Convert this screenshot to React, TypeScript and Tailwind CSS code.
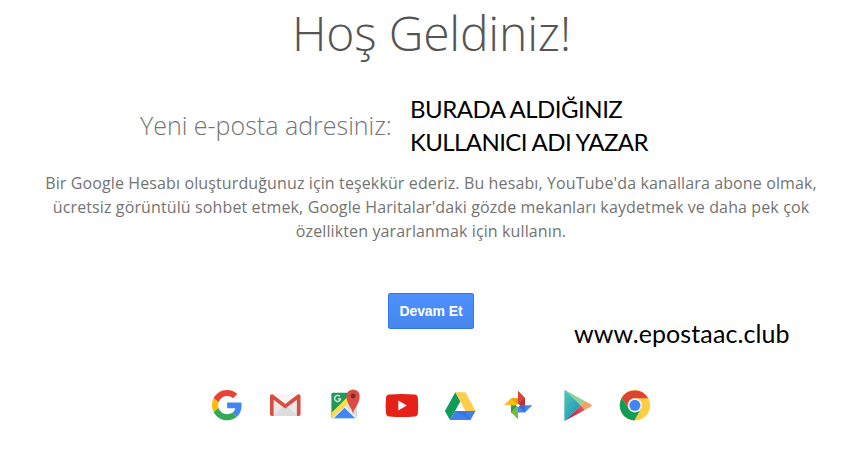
import type { ReactNode } from "react";

function Icon({ label, children }: { label: string; children: ReactNode }) {
  return (
    <svg role="img" aria-label={label} viewBox="0 0 32 32" className="size-8 shrink-0 overflow-visible">
      {children}
    </svg>
  );
}

function GoogleIcon() {
  return (
    <Icon label="Google">
      <g transform="translate(1 1) scale(.63)">
        <path fill="#EA4335" d="M24 9.5c3.54 0 6.71 1.22 9.21 3.6l6.85-6.85C35.9 2.38 30.47 0 24 0 14.62 0 6.51 5.38 2.56 13.22l7.98 6.19C12.43 13.72 17.74 9.5 24 9.5z" />
        <path fill="#4285F4" d="M46.98 24.55c0-1.57-.15-3.09-.38-4.55H24v9.02h12.94c-.58 2.96-2.26 5.48-4.78 7.18l7.73 6c4.51-4.18 7.09-10.36 7.09-17.65z" />
        <path fill="#FBBC05" d="M10.53 28.59c-.48-1.45-.76-2.99-.76-4.59s.27-3.14.76-4.59l-7.98-6.19C.92 16.46 0 20.12 0 24c0 3.88.92 7.54 2.56 10.78l7.97-6.19z" />
        <path fill="#34A853" d="M24 48c6.48 0 11.93-2.13 15.89-5.81l-7.73-6c-2.15 1.45-4.92 2.3-8.16 2.3-6.26 0-11.57-4.22-13.47-9.91l-7.98 6.19C6.51 42.62 14.62 48 24 48z" />
      </g>
    </Icon>
  );
}

function GmailIcon() {
  return (
    <Icon label="Gmail">
      <rect x="1" y="5.5" width="30.5" height="21.5" rx="1.5" fill="#e9e9e9" />
      <path d="M4 27 16.2 16 28.5 27z" fill="#dcdcdc" />
      <path d="M3 6h26.5L16.2 16.5z" fill="#f5f5f5" />
      <path d="M1 7.2C1 6 1.8 5.3 3 5.3c.6 0 1 .2 1.5.6l11.7 9 11.8-9c.4-.4.9-.6 1.5-.6 1.2 0 2 .8 2 1.9V25c0 1.2-.8 2-2 2h-1.6V10.8L16.2 19.6 4.6 10.8V27H3c-1.2 0-2-.8-2-2z" fill="#da4b40" />
    </Icon>
  );
}

function MapsIcon() {
  return (
    <Icon label="Google Maps">
      <defs>
        <clipPath id="map"><rect x="3.4" y="3.7" width="25" height="25.6" rx="1.6" /></clipPath>
      </defs>
      <g clipPath="url(#map)">
        <rect x="3" y="3" width="26" height="27" fill="#23985b" />
        <path d="M3 29.5 29 3.5v27H3z" fill="#ececec" />
        <path d="M3 29.5v-5.2L24 3.5h6v3z" fill="#fbdc4b" />
        <path d="M5.7 29.5 16.5 18.7 27.3 29.5z" fill="#4285f4" />
        <path d="m18 17.3 11 11V13.5l-5-1z" fill="#d9dadb" />
      </g>
      <path d="M25 25c-.5-6-6.5-9.6-6.5-18A6.6 6.6 0 0 1 31.700 7c0 8.400-6 12-6.700 18z" fill="#dd4b45" />
      <circle cx="25.1" cy="7" r="2.4" fill="#802825" />
      <path d="M11.800 7.400A3 3 0 1 0 12.600 9.800H9.800" fill="none" stroke="#e6f5ed" strokeWidth="1.3" />
    </Icon>
  );
}

function YouTubeIcon() {
  return (
    <Icon label="YouTube">
      <path d="M3.5 5.5Q16 4.3 28.5 5.5c2.4.2 3.2 1.4 3.4 3.5q.5 7.5 0 15c-.2 2.1-1 3.3-3.4 3.5q-12.500 1.200-25 0C1.100 27.300.2 26.100 0 24q-.8-7.500 0-15c.2-2.100 1.100-3.300 3.500-3.500z" fill="#e62117" />
      <path d="M12.300 11.500v10l8.500-5z" fill="#fff" />
    </Icon>
  );
}

function DriveIcon() {
  return (
    <Icon label="Google Drive">
      <path d="m11.300 3.300 5.200 9L6 31 .9 22z" fill="#109b58" />
      <path d="M11.300 3.300h10.200L31.600 22H21.500z" fill="#fdcd4b" />
      <path d="M11 22h20.600l-5.100 9H6z" fill="#3f80eb" />
      <path d="m11 22 10.500 0 5 9z" fill="#3777df" />
    </Icon>
  );
}

function PhotosIcon() {
  return (
    <Icon label="Google Photos">
      <path d="M16 1.700v14.600h7V8.800z" fill="#db4437" />
      <path d="m16 16.300 7-7.500v7.500z" fill="#b5323a" />
      <path d="M16 16.300h14.300L23 23.500h-7z" fill="#4285f4" />
      <path d="M16 16.300h7v7.200z" fill="#3a6cc8" />
      <path d="M16 16.300v14L9 23.200v-6.900z" fill="#76b943" />
      <path d="M16 16.300 9 23.200v-6.900z" fill="#2f9b50" />
      <path d="M16 16.300H1.900L9 9.200h7z" fill="#fbbc19" />
      <path d="M16 16.300 9 9.200h7z" fill="#f2a00b" />
      <circle cx="16" cy="16.300" r="1.600" fill="#fff" />
    </Icon>
  );
}

function PlayIcon() {
  return (
    <Icon label="Google Play">
      <defs>
        <linearGradient id="play" x1="0" y1="0" x2="1" y2="1">
          <stop stopColor="#55c7b4" />
          <stop offset=".6" stopColor="#2aa5b8" />
          <stop offset="1" stopColor="#477fae" />
        </linearGradient>
        <linearGradient id="play-red" x1="0" y1="1" x2="1" y2="0">
          <stop stopColor="#743070" />
          <stop offset=".5" stopColor="#ce3150" />
          <stop offset="1" stopColor="#e8635b" />
        </linearGradient>
      </defs>
      <path d="M3.300 2Q3.300 1 4.500 1.300L20 16.400 4.500 31.500Q3.300 32 3.300 31z" fill="url(#play)" />
      <path d="M4 1 23.800 12 20 16.400z" fill="#91d19a" />
      <path d="m23.800 12 6.500 3.600q1.200.8 0 1.700L23.800 21 20 16.400z" fill="#f6a266" />
      <path d="M20 16.400 23.800 21 4 31.800z" fill="url(#play-red)" />
    </Icon>
  );
}

function ChromeIcon() {
  return (
    <Icon label="Google Chrome">
      <circle cx="15.900" cy="16.300" r="15.200" fill="#ffcd42" />
      <path d="M2.700 8.800A15.200 15.200 0 0 1 29.100 9.300H15.900a7 7 0 0 0-6.100 10.500z" fill="#db4437" />
      <path d="M2.700 8.800a15.200 15.200 0 0 0 12.600 22.700l6.700-11.700a7 7 0 0 1-12.200 0z" fill="#109d58" />
      <circle cx="15.900" cy="16.300" r="7.100" fill="#f2f2f2" />
      <circle cx="15.900" cy="16.300" r="5.500" fill="#4285f4" />
    </Icon>
  );
}

export default function App() {
  return (
    <main className="flex h-[463px] w-[849px] flex-col overflow-hidden bg-white font-['Open_Sans',sans-serif] text-[#737373]">
      <h1 className="pl-[14px] text-center text-[48px] leading-[66px] font-light tracking-[-0.2px] text-[#555]">Hoş Geldiniz!</h1>

      <section className="mt-[26px] flex h-[66px] items-center pl-[140px]">
        <p className="w-[270px] text-[25px] leading-[34px] font-light whitespace-nowrap">Yeni e-posta adresiniz:</p>
        <div className="font-['Lato',sans-serif] text-[24px] leading-[33px] whitespace-nowrap text-black">
          <p className="tracking-[-0.5px]">BURADA ALDIĞINIZ</p>
          <p className="tracking-[-0.6px]">KULLANICI ADI YAZAR</p>
        </div>
      </section>

      <p className="mt-[13px] pl-[13px] text-center text-[16px] leading-6 tracking-[0.12px] whitespace-nowrap">
        Bir Google Hesabı oluşturduğunuz için teşekkür ederiz. Bu hesabı, YouTube'da kanallara abone olmak,
        <br />
        ücretsiz görüntülü sohbet etmek, Google Haritalar'daki gözde mekanları kaydetmek ve daha pek çok
        <br />
        özellikten yararlanmak için kullanın.
      </p>

      <div className="mt-[50px] flex pl-[388px]">
        <button className="h-9 w-[86px] rounded-[2px] border border-[#3079ed] bg-linear-to-b from-[#4d90fe] to-[#4787ed] font-['Liberation_Sans',sans-serif] text-[14px] font-bold tracking-[-0.1px] whitespace-nowrap text-white">Devam Et</button>
        <p className="mt-6 ml-[100px] font-['Lato',sans-serif] text-[25px] leading-[33px] tracking-[0.1px] text-black">www.epostaac.club</p>
      </div>

      <nav aria-label="Google" className="mt-[39px] ml-[211px] flex w-[440px] justify-between">
        <GoogleIcon />
        <GmailIcon />
        <MapsIcon />
        <YouTubeIcon />
        <DriveIcon />
        <PhotosIcon />
        <PlayIcon />
        <ChromeIcon />
      </nav>
    </main>
  );
}
